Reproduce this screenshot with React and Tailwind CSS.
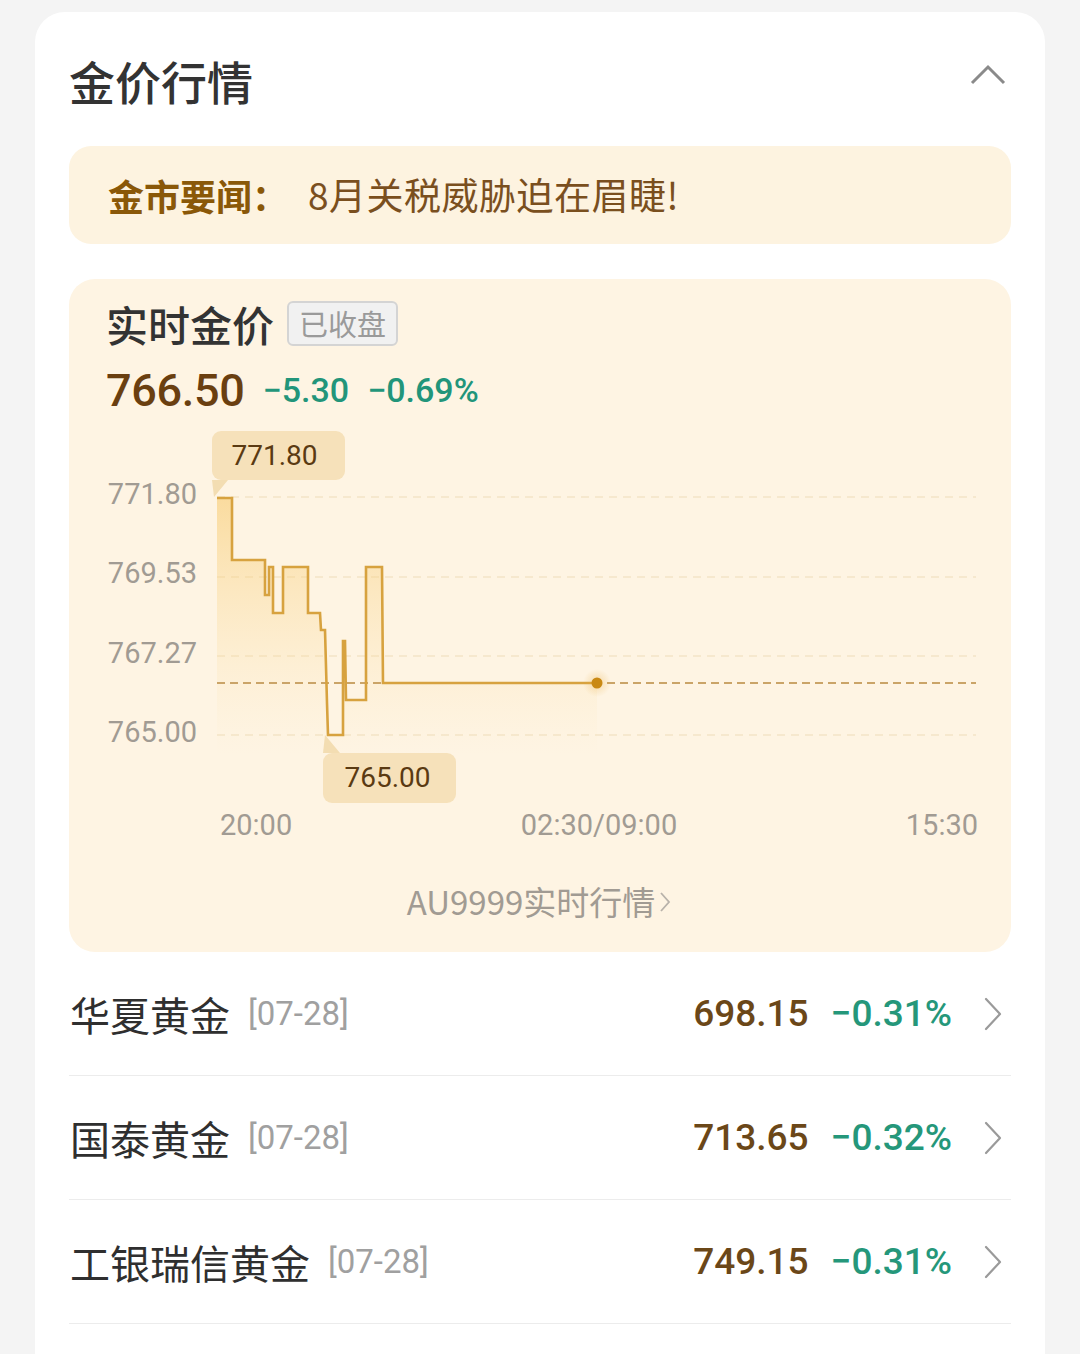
import React from "react";

const pts = [
  [0, 73], [15, 73], [15, 135], [48, 135], [48, 170], [52, 170], [52, 142], [56, 142],
  [56, 188], [66, 188], [66, 142], [91, 142], [91, 188], [103, 188], [104, 205], [108, 205],
  [110, 278], [111, 310], [126, 310], [126, 216], [128, 216], [129, 275], [149, 275],
  [149, 142], [165, 142], [166, 258], [380, 258],
];
const linePath = "M" + pts.map((p) => p.join(",")).join(" L");
const areaPath = linePath + " L380,330 L0,330 Z";

function Chevron() {
  return (
    <svg width="20" height="34" viewBox="0 0 20 34" className="shrink-0">
      <polyline points="3,2 17,17 3,32" fill="none" stroke="#9a9a9a" strokeWidth="2.2" strokeLinecap="round" strokeLinejoin="round" />
    </svg>
  );
}

function Row({ name, price, pct }) {
  return (
    <div className="flex h-[124px] items-center justify-between border-b border-[#ececec] pl-[1px] pr-[8px]">
      <div className="flex items-center gap-[18px]">
        <span className="text-[40px] leading-none text-[#2f2f2f] font-['Noto_Sans_CJK_SC',sans-serif]">{name}</span>
        <span className="text-[33px] leading-none text-[#a0a0a0] font-['Roboto','Noto_Sans_CJK_SC',sans-serif]">[07-28]</span>
      </div>
      <div className="flex items-center">
        <span className="text-[37px] leading-none font-medium text-[#6b4718] font-['Roboto',sans-serif]">{price}</span>
        <span className="ml-[22px] text-[37px] leading-none font-medium text-[#25977a] font-['Roboto',sans-serif]">{pct}</span>
        <span className="ml-[31px]"><Chevron /></span>
      </div>
    </div>
  );
}

export default function App() {
  return (
    <div className="min-h-[1354px] w-[1080px] bg-[#f4f4f4] pt-[12px] font-['Noto_Sans_CJK_SC',sans-serif]">
      <div className="mx-[35px] min-h-[1342px] rounded-t-[30px] bg-white px-[34px]">
        {/* header */}
        <div className="flex items-center justify-between pt-[44px]">
          <span className="text-[46px] leading-[48px] font-medium text-[#333333]">金价行情</span>
          <svg width="38" height="24" viewBox="0 0 38 24" className="mb-[10px] mr-[4px]">
            <polyline points="3,20 19,4 35,20" fill="none" stroke="#8a8a8a" strokeWidth="3" strokeLinejoin="miter" />
          </svg>
        </div>

        {/* news */}
        <div className="mt-[42px] flex h-[98px] items-center rounded-[22px] bg-[#fdf3e0] pl-[39px]">
          <span className="text-[36px] font-bold text-[#8a5808]">金市要闻：</span>
          <span className="ml-[20px] text-[37px] tracking-[0.5px] text-[#7a4f1e]">8月关税威胁迫在眉睫!</span>
        </div>

        {/* chart card */}
        <div className="mt-[35px] rounded-[26px] bg-[#fef4e3] pb-[32px] pl-[37px] pr-[35px] pt-[22px]">
          <div className="flex h-[45px] items-center gap-[13px]">
            <span className="text-[42px] leading-none font-medium text-[#333333]">实时金价</span>
            <span className="flex h-[45px] items-center rounded-[6px] border-2 border-[#d4d4d4] bg-[#f1f1f1] px-[10px] text-[29px] leading-none text-[#9a9a9a]">已收盘</span>
          </div>
          <div className="mt-[19px] flex h-[50px] items-center font-['Roboto',sans-serif]">
            <span className="text-[45px] font-medium leading-none tracking-[-0.3px] text-[#6a3f10]">766.50</span>
            <span className="ml-[18px] text-[34px] font-medium leading-none text-[#22957a]">−5.30</span>
            <span className="ml-[18px] text-[34px] font-medium leading-none text-[#22957a]">−0.69%</span>
          </div>

          {/* chart */}
          <div className="relative mt-[10px] flex h-[380px] gap-[20px]">
            <div className="flex w-[91px] flex-col pt-[30px] font-['Roboto',sans-serif] text-[29px] text-[#a19b93]">
              <div className="flex h-[79.33px] items-center justify-end">771.80</div>
              <div className="flex h-[79.33px] items-center justify-end">769.53</div>
              <div className="flex h-[79.33px] items-center justify-end">767.27</div>
              <div className="flex h-[79.33px] items-center justify-end">765.00</div>
            </div>
            <svg width="759" height="380" viewBox="0 0 759 380" className="overflow-visible">
              <defs>
                <linearGradient id="fillg" x1="0" y1="73" x2="0" y2="330" gradientUnits="userSpaceOnUse">
                  <stop offset="0" stopColor="#f7c766" stopOpacity="0.55" />
                  <stop offset="1" stopColor="#fbe3b0" stopOpacity="0" />
                </linearGradient>
                <radialGradient id="glow">
                  <stop offset="0" stopColor="#e6a93a" stopOpacity="0.35" />
                  <stop offset="1" stopColor="#e6a93a" stopOpacity="0" />
                </radialGradient>
              </defs>
              {[72, 152, 231, 310].map((y) => (
                <line key={y} x1="0" y1={y} x2="759" y2={y} stroke="#f3e4c8" strokeWidth="1.5" strokeDasharray="8 6" />
              ))}
              <path d={areaPath} fill="url(#fillg)" />
              <line x1="0" y1="258" x2="759" y2="258" stroke="#caa468" strokeWidth="2" strokeDasharray="8 5" />
              <path d={linePath} fill="none" stroke="#d7a23f" strokeWidth="2.6" strokeLinejoin="miter" />
              <circle cx="380" cy="258" r="14" fill="url(#glow)" />
              <circle cx="380" cy="258" r="5.5" fill="#c98914" />
              <polygon points="-5,55 11,55 -3,72" fill="#f3ddb2" />
              <polygon points="106,328 123,328 108,310" fill="#f3ddb2" />
            </svg>

            <div className="absolute left-[106px] top-[6px] flex h-[49px] w-[133px] items-center justify-center rounded-[9px] bg-[#f6e1ba] pr-[8px] font-['Roboto',sans-serif] text-[28px] text-[#5a3a12]">771.80</div>
            <div className="absolute left-[217px] top-[328px] flex h-[50px] w-[133px] items-center justify-center rounded-[9px] bg-[#f6e1ba] pr-[4px] font-['Roboto',sans-serif] text-[28px] text-[#5a3a12]">765.00</div>
          </div>

          <div className="ml-[111px] mt-[6px] flex h-[30px] items-center justify-between pl-[3px] font-['Roboto',sans-serif] text-[29px] text-[#a19b93]">
            <span>20:00</span>
            <span>02:30/09:00</span>
            <span className="-mr-[2px]">15:30</span>
          </div>

          <div className="mt-[43px] flex h-[36px] items-center justify-center pr-[4px] text-[33px] text-[#a19b93]">
            <span>AU9999实时行情</span>
            <svg width="12" height="22" viewBox="0 0 12 22" className="ml-[4px]">
              <polyline points="2,2 10,11 2,20" fill="none" stroke="#b8b2aa" strokeWidth="1.8" />
            </svg>
          </div>
        </div>

        {/* list */}
        <div>
          <Row name="华夏黄金" price="698.15" pct="−0.31%" />
          <Row name="国泰黄金" price="713.65" pct="−0.32%" />
          <Row name="工银瑞信黄金" price="749.15" pct="−0.31%" />
        </div>
      </div>
    </div>
  );
}
